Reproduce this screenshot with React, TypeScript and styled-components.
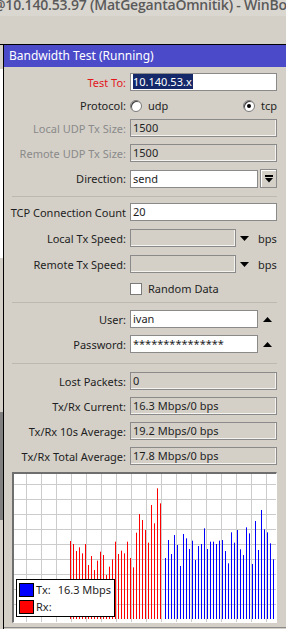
import * as React from "react";
import styled, { createGlobalStyle } from "styled-components";

const GlobalStyle = createGlobalStyle`
  html, body {
    margin: 0;
    padding: 0;
    background: #d4d0c8;
    overflow: hidden;
  }
  body {
    font-family: "Noto Sans", "Open Sans", sans-serif;
    font-size: 11px;
    color: #1e1e1e;
  }
`;

const RED_TOPS = [
  213, 222, 243, 232, 250, 222, 285, 258, 300, 272, 245, 255, 315, 290, 268,
  215, 252, 242, 250, 215, 264, 292, 188, 132, 150, 180, 218, 105, 160, 55, 100,
];
const BLUE_TOPS = [
  264, 210, 252, 195, 225, 288, 192, 205, 237, 212, 270, 228, 222, 175, 237,
  215, 215, 222, 212, 210, 243, 280, 187, 218, 180, 238, 255, 172, 190, 282,
  153, 240, 120, 178, 187, 220, 268,
];

const Screen = styled.div`
  width: 286px;
  height: 629px;
  display: flex;
  flex-direction: column;
  overflow: hidden;
`;

const AppTitle = styled.div`
  height: 16px;
  background: #dad7d1;
  overflow: hidden;
  white-space: nowrap;
  font-family: "Open Sans", "Noto Sans", sans-serif;
  font-weight: 600;
  font-size: 14px;
  line-height: 16px;
  color: #5a5a5a;
  letter-spacing: -0.2px;
  span {
    display: block;
    margin-top: -3px;
    margin-left: -7px;
  }
`;

const Toolbar = styled.div`
  height: 28px;
  background: #d4d0c8;
`;

const Workspace = styled.div`
  flex: 1;
  display: flex;
  border-top: 1px solid #000;
  min-height: 0;
`;

const BackWindow = styled.div`
  width: 3px;
  display: flex;
  flex-direction: column;
`;

const BackPiece = styled.div<{ $h: number; $bg: string }>`
  height: ${(p) => p.$h}px;
  background: ${(p) => p.$bg};
  flex-shrink: 0;
`;

const Dialog = styled.div`
  flex: 1;
  display: flex;
  flex-direction: column;
  border-left: 1px solid #000;
  background: #d4d0c8;
  min-width: 0;
`;

const TitleBar = styled.div`
  height: 22px;
  background: #4b4bca;
  color: #fff;
  font-size: 12px;
  line-height: 22px;
  padding-left: 5px;
  white-space: nowrap;
`;

const Body = styled.div`
  padding: 6px 9px 0 8px;
  display: flex;
  flex-direction: column;
`;

const Section = styled.div<{ $gap: number }>`
  display: flex;
  flex-direction: column;
  gap: ${(p) => p.$gap}px;
`;

const Row = styled.div<{ $h?: number }>`
  display: grid;
  grid-template-columns: 114px 1fr;
  column-gap: 4px;
  height: ${(p) => p.$h ?? 18}px;
  align-items: center;
`;

const Label = styled.div<{ $tone?: "normal" | "muted" | "alert" }>`
  display: flex;
  justify-content: flex-end;
  white-space: nowrap;
  min-width: 0;
  color: ${(p) =>
    p.$tone === "muted" ? "#8a8a8a" : p.$tone === "alert" ? "#e3161b" : "#1e1e1e"};
`;

const Controls = styled.div`
  display: flex;
  align-items: center;
  height: 100%;
  min-width: 0;
`;

const Field = styled.div<{ $disabled?: boolean; $w?: number }>`
  box-sizing: border-box;
  height: 18px;
  ${(p) => (p.$w ? `width: ${p.$w}px; flex-shrink: 0;` : "flex: 1;")}
  background: ${(p) => (p.$disabled ? "#d4d0c8" : "#fff")};
  border: 1px solid #8a8a8a;
  box-shadow: ${(p) => (p.$disabled ? "inset -1px -1px 0 #f4f3f0" : "none")};
  padding: 0 2px;
  line-height: 16px;
  white-space: nowrap;
  overflow: hidden;
  color: #1e1e1e;
`;

const Selected = styled.span`
  background: #14286a;
  color: #fff;
  padding: 0 1px 0 0;
`;

const Separator = styled.div<{ $top: number; $bottom: number }>`
  height: 1px;
  background: #bdb9b1;
  margin: ${(p) => p.$top}px 0 ${(p) => p.$bottom}px 0;
`;

const ChoiceGroup = styled.label`
  display: flex;
  align-items: center;
  gap: 6px;
`;

const Radio = styled.span<{ $checked?: boolean }>`
  box-sizing: border-box;
  width: 12px;
  height: 12px;
  border-radius: 50%;
  background: #fff;
  border: 1px solid #7a7a7a;
  box-shadow: inset 1px 1px 0 #404040;
  display: flex;
  align-items: center;
  justify-content: center;
  &::after {
    content: "";
    width: 4px;
    height: 4px;
    border-radius: 50%;
    background: ${(p) => (p.$checked ? "#000" : "transparent")};
  }
`;

const Check = styled.span`
  box-sizing: border-box;
  width: 12px;
  height: 12px;
  background: #fff;
  border: 1px solid #7a7a7a;
`;

const DropButton = styled.div`
  box-sizing: border-box;
  width: 17px;
  height: 19px;
  margin-left: 2px;
  background: #d4d0c8;
  border: 1px solid #8a8a8a;
  box-shadow: inset 1px 1px 0 #fff;
  display: flex;
  align-items: center;
  justify-content: center;
`;

const ArrowSlot = styled.div<{ $ml: number; $w: number }>`
  margin-left: ${(p) => p.$ml}px;
  width: ${(p) => p.$w}px;
  display: flex;
  align-items: center;
  flex-shrink: 0;
`;

const Unit = styled.span`
  margin-left: 9px;
  white-space: nowrap;
`;

const Graph = styled.div`
  position: relative;
  margin-top: 7px;
  height: 151px;
  box-sizing: border-box;
  background: #fff;
  border-top: 2px solid #6e6e6e;
  border-left: 2px solid #6e6e6e;
  border-right: 1px solid #fff;
  border-bottom: 1px solid #fff;
`;

const GraphSvg = styled.svg`
  display: block;
  width: 100%;
  height: 100%;
`;

const Legend = styled.div`
  position: absolute;
  left: 2px;
  top: 105px;
  width: 99px;
  height: 38px;
  box-sizing: border-box;
  background: #fff;
  border: 1px solid #000;
  padding: 3px 2px;
  display: flex;
  flex-direction: column;
  gap: 3px;
`;

const LegendRow = styled.div`
  display: flex;
  align-items: center;
  height: 14px;
  line-height: 14px;
  font-size: 11px;
`;

const Swatch = styled.span<{ $color: string }>`
  box-sizing: border-box;
  width: 15px;
  height: 14px;
  background: ${(p) => p.$color};
  border: 1px solid #000;
  margin-right: 2px;
`;

const LegendValue = styled.span`
  margin-left: 7px;
`;

const BottomEdge = styled.div`
  margin-top: 4px;
  height: 1px;
  background: #8a8a8a;
`;

const DownArrow = () => (
  <svg width="9" height="5" viewBox="0 0 9 5">
    <polygon points="0,0 9,0 4.5,5" fill="#000" />
  </svg>
);

const UpArrow = () => (
  <svg width="9" height="5" viewBox="0 0 9 5">
    <polygon points="0,5 9,5 4.5,0" fill="#000" />
  </svg>
);

const BarDownIcon = () => (
  <svg width="8" height="8" viewBox="0 0 8 8">
    <rect x="0" y="0" width="8" height="2" fill="#000" />
    <polygon points="0,3 8,3 4,7.5" fill="#000" />
  </svg>
);

const Chart = () => {
  const w = 262;
  const h = 148;
  const base = 145;
  const hLines: number[] = [];
  for (let y = base - 15; y > 0; y -= 15) hLines.push(y + 0.5);
  const vLines: number[] = [];
  for (let x = 12.5; x < w; x += 15) vLines.push(x);
  return (
    <GraphSvg viewBox={`0 0 ${w} ${h}`} preserveAspectRatio="none">
      {hLines.map((y) => (
        <line key={"h" + y} x1={0} x2={w} y1={y} y2={y} stroke="#cccccc" strokeWidth={1} />
      ))}
      {vLines.map((x) => (
        <line key={"v" + x} x1={x} x2={x} y1={0} y2={h} stroke="#cccccc" strokeWidth={1} />
      ))}
      {RED_TOPS.map((v, i) => (
        <line
          key={"r" + i}
          x1={56.5 + 3 * i}
          x2={56.5 + 3 * i}
          y1={base}
          y2={v / 3 - 4}
          stroke="#ff0000"
          strokeWidth={1}
        />
      ))}
      {BLUE_TOPS.map((v, i) => (
        <line
          key={"b" + i}
          x1={151.5 + 3 * i}
          x2={151.5 + 3 * i}
          y1={base}
          y2={v / 3 - 4}
          stroke="#0000ff"
          strokeWidth={1}
        />
      ))}
    </GraphSvg>
  );
};

const stats = [
  { label: "Lost Packets:", value: "0" },
  { label: "Tx/Rx Current:", value: "16.3 Mbps/0 bps" },
  { label: "Tx/Rx 10s Average:", value: "19.2 Mbps/0 bps" },
  { label: "Tx/Rx Total Average:", value: "17.8 Mbps/0 bps" },
];

export default function App() {
  return (
    <>
      <GlobalStyle />
      <Screen>
        <AppTitle>
          <span>@10.140.53.97 (MatGegantaOmnitik) - WinBox v6.48</span>
        </AppTitle>
        <Toolbar />
        <Workspace>
          <BackWindow>
            <BackPiece $h={24} $bg="#d4d0c8" />
            <BackPiece $h={189} $bg="#ffffff" />
            <BackPiece $h={154} $bg="#d4d0c8" />
            <BackPiece $h={108} $bg="#808080" />
            <BackPiece $h={120} $bg="#d4d0c8" />
          </BackWindow>
          <Dialog>
            <TitleBar>Bandwidth Test (Running)</TitleBar>
            <Body>
              <Section $gap={7}>
                <Row>
                  <Label $tone="alert">Test To:</Label>
                  <Controls>
                    <Field>
                      <Selected>10.140.53.x</Selected>
                    </Field>
                  </Controls>
                </Row>
                <Row $h={14}>
                  <Label>Protocol:</Label>
                  <Controls style={{ justifyContent: "space-between" }}>
                    <ChoiceGroup>
                      <Radio />
                      udp
                    </ChoiceGroup>
                    <ChoiceGroup>
                      <Radio $checked />
                      tcp
                    </ChoiceGroup>
                  </Controls>
                </Row>
                <Row>
                  <Label $tone="muted">Local UDP Tx Size:</Label>
                  <Controls>
                    <Field $disabled>1500</Field>
                  </Controls>
                </Row>
                <Row>
                  <Label $tone="muted">Remote UDP Tx Size:</Label>
                  <Controls>
                    <Field $disabled>1500</Field>
                  </Controls>
                </Row>
                <Row>
                  <Label>Direction:</Label>
                  <Controls>
                    <Field>send</Field>
                    <DropButton>
                      <BarDownIcon />
                    </DropButton>
                  </Controls>
                </Row>
              </Section>
              <Separator $top={9} $bottom={6} />
              <Section $gap={8}>
                <Row>
                  <Label>TCP Connection Count</Label>
                  <Controls>
                    <Field>20</Field>
                  </Controls>
                </Row>
                <Row>
                  <Label>Local Tx Speed:</Label>
                  <Controls>
                    <Field $disabled $w={106} />
                    <ArrowSlot $ml={4} $w={9}>
                      <DownArrow />
                    </ArrowSlot>
                    <Unit>bps</Unit>
                  </Controls>
                </Row>
                <Row>
                  <Label>Remote Tx Speed:</Label>
                  <Controls>
                    <Field $disabled $w={106} />
                    <ArrowSlot $ml={4} $w={9}>
                      <DownArrow />
                    </ArrowSlot>
                    <Unit>bps</Unit>
                  </Controls>
                </Row>
                <Row $h={14}>
                  <span />
                  <Controls>
                    <ChoiceGroup>
                      <Check />
                      Random Data
                    </ChoiceGroup>
                  </Controls>
                </Row>
              </Section>
              <Separator $top={7} $bottom={7} />
              <Section $gap={7}>
                <Row>
                  <Label>User:</Label>
                  <Controls>
                    <Field $w={128}>ivan</Field>
                    <ArrowSlot $ml={5} $w={9}>
                      <UpArrow />
                    </ArrowSlot>
                  </Controls>
                </Row>
                <Row>
                  <Label>Password:</Label>
                  <Controls>
                    <Field $w={128}>***************</Field>
                    <ArrowSlot $ml={5} $w={9}>
                      <UpArrow />
                    </ArrowSlot>
                  </Controls>
                </Row>
              </Section>
              <Separator $top={10} $bottom={8} />
              <Section $gap={7}>
                {stats.map((s) => (
                  <Row key={s.label}>
                    <Label>{s.label}</Label>
                    <Controls>
                      <Field $disabled>{s.value}</Field>
                    </Controls>
                  </Row>
                ))}
              </Section>
              <Graph>
                <Chart />
                <Legend>
                  <LegendRow>
                    <Swatch $color="#0000ff" />
                    Tx:<LegendValue>16.3 Mbps</LegendValue>
                  </LegendRow>
                  <LegendRow>
                    <Swatch $color="#ff0000" />
                    Rx:
                  </LegendRow>
                </Legend>
              </Graph>
            </Body>
            <BottomEdge />
          </Dialog>
        </Workspace>
      </Screen>
    </>
  );
}
